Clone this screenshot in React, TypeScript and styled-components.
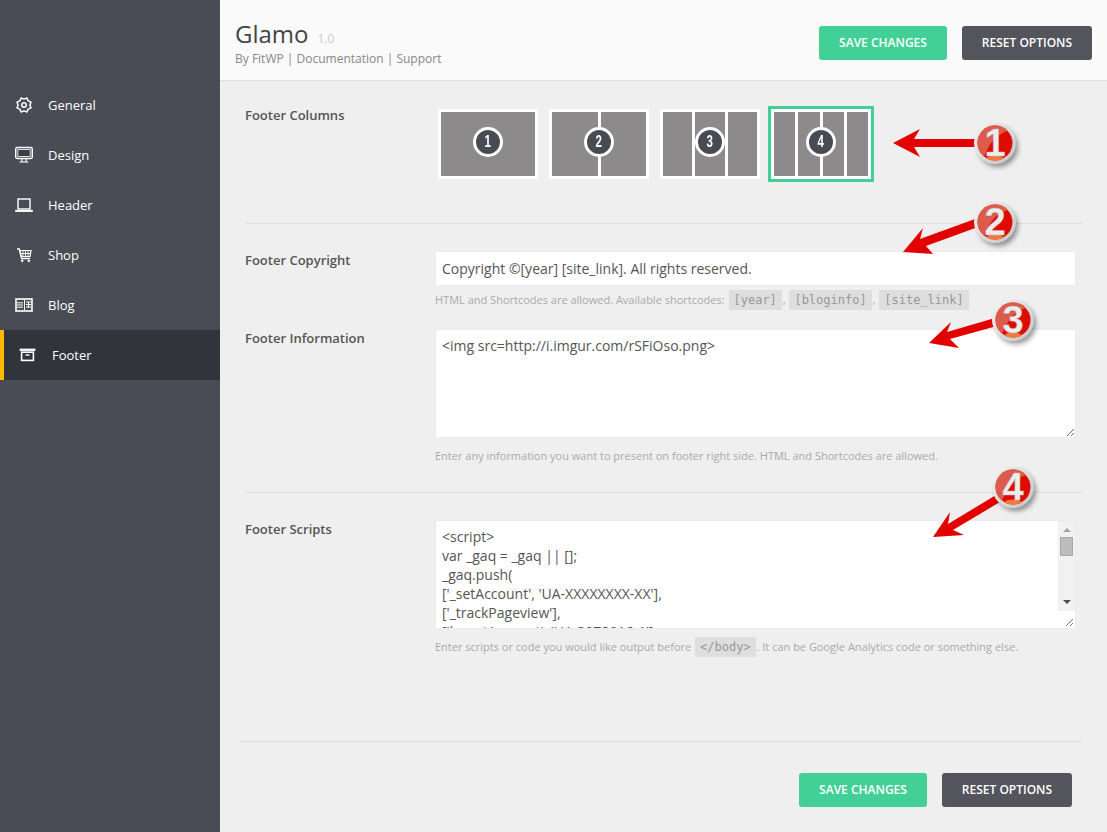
import React from 'react';
import styled, { createGlobalStyle } from 'styled-components';

const Global = createGlobalStyle`
  html, body { margin: 0; padding: 0; background: #efefef; }
  body { font-family: "Open Sans", "Liberation Sans", sans-serif; color: #555; }
  * { box-sizing: border-box; }
`;

const Page = styled.div`
  position: relative;
  display: flex;
  width: 1107px;
  height: 832px;
  overflow: hidden;
`;
const Sidebar = styled.nav`
  width: 220px;
  flex: none;
  padding-top: 80px;
  background-color: #4a4d56;
  background-image: radial-gradient(circle at 1px 1px, #464951 1px, transparent 1.2px);
  background-size: 4px 4px;
`;
const NavItem = styled.div<{ $active?: boolean }>`
  display: flex;
  align-items: center;
  height: 50px;
  gap: 15px;
  font-size: 13px;
  color: #fff;
  padding-left: 15px;
  background: ${(p) => (p.$active ? '#32343c' : 'transparent')};
  border-left: ${(p) => (p.$active ? '4px solid #ffb900' : '0')};
`;
const NavGlyph = styled.svg`
  width: 18px;
  height: 18px;
  flex: none;
  fill: none;
  stroke: #fff;
  stroke-width: 1.3;
`;
const Main = styled.main`
  flex: 1;
  display: flex;
  flex-direction: column;
  min-width: 0;
`;
const Header = styled.header`
  height: 81px;
  flex: none;
  display: flex;
  justify-content: space-between;
  padding: 17px 15px 0;
  background: #fafafa;
  border-bottom: 1px solid #dedede;
`;
const Title = styled.h1`
  margin: 0;
  font-size: 24px;
  line-height: 34px;
  font-weight: 400;
  color: #444;
`;
const Version = styled.small`
  font-size: 12px;
  line-height: 1;
  color: #ccc;
  margin-left: 9px;
`;
const Byline = styled.div`
  font-size: 12px;
  line-height: 15px;
  color: #888;
  height: 15px;
`;
const Actions = styled.div`
  display: flex;
  gap: 15px;
  padding-top: 9px;
`;
const Button = styled.button<{ $kind: 'save' | 'reset' }>`
  height: 34px;
  width: ${(p) => (p.$kind === 'save' ? '128px' : '130px')};
  border: 0;
  border-radius: 3px;
  padding: 0 0 2px;
  font: 600 12px "Open Sans", sans-serif;
  text-transform: uppercase;
  color: #fff;
  background: ${(p) => (p.$kind === 'save' ? '#43d096' : '#53545c')};
`;
const Body = styled.div`
  flex: 1;
  padding: 25px 24px 0 25px;
`;
const Row = styled.section`
  display: grid;
  grid-template-columns: 190px 641px;
`;
const Label = styled.div<{ $lift?: boolean }>`
  font-size: 13px;
  line-height: 18px;
  font-weight: 600;
  color: #555;
  margin-top: ${(p) => (p.$lift ? '-1px' : '0')};
`;
const Divider = styled.hr<{ $top: number; $bottom: number }>`
  border: 0;
  height: 1px;
  background: #dedede;
  margin: ${(p) => p.$top}px 0 ${(p) => p.$bottom}px;
`;
const Thumbs = styled.div`
  display: flex;
  gap: 11px;
  padding: 3px;
`;
const Thumb = styled.div<{ $active?: boolean }>`
  position: relative;
  width: 100px;
  height: 70px;
  border: 3px solid #fff;
  background: #fff;
  display: flex;
  gap: 3px;
  outline: ${(p) => (p.$active ? '3px solid #43d096' : '0')};
`;
const Cell = styled.div`
  flex: 1;
  background: #8c8a8b;
`;
const Badge = styled.span`
  position: absolute;
  left: 50%;
  top: 15px;
  width: 30px;
  height: 30px;
  margin-left: -15px;
  border-radius: 50%;
  border: 3px solid #fff;
  background: #484b53;
  display: flex;
  align-items: center;
  justify-content: center;
`;
const Numeral = styled.span`
  display: block;
  color: #fff;
  font: 700 17px/24px "Liberation Sans", sans-serif;
  transform: scaleX(0.68);
`;
const inputBase = `
  display: block;
  width: 639px;
  margin-left: 1px;
  border: 0;
  outline: 0;
  background: #fff;
  box-shadow: 0 0 2px rgba(0,0,0,.06);
  font: 400 14px/19px "Open Sans", sans-serif;
  color: #555;
`;
const TextInput = styled.input`
  ${inputBase}
  height: 33px;
  margin-top: 1px;
  padding: 0 6px;
`;
const TextArea = styled.textarea`
  ${inputBase}
  height: 107px;
  padding: 6px 6px;
  margin-top: 0;
  resize: both;
`;
const Hint = styled.div<{ $top: number }>`
  margin-top: ${(p) => p.$top}px;
  height: 20px;
  font-size: 11px;
  line-height: 18px;
  color: #aaa;
`;
const Chip = styled.code`
  display: inline-block;
  height: 20px;
  padding: 0 5px;
  margin: 0 -2px 0 1px;
  background: #dedede;
  color: #999;
  font: 12px/20px "DejaVu Sans Mono", monospace;
`;
const NextField = styled.div`
  height: 20px;
`;
const ScriptBox = styled.div`
  display: flex;
  width: 639px;
  margin-left: 1px;
  height: 107px;
  background: #fff;
  box-shadow: 0 0 2px rgba(0,0,0,.06);
`;
const Code = styled.pre`
  flex: 1;
  margin: 0;
  padding: 6px 6px 0;
  overflow: hidden;
  font: 400 14px/19px "Open Sans", sans-serif;
  color: #555;
`;
const Scroll = styled.div`
  width: 17px;
  display: flex;
  flex-direction: column;
  align-items: center;
`;
const Track = styled.div`
  flex: 1;
  width: 100%;
  background: #f1f1f1;
  display: flex;
  flex-direction: column;
  align-items: center;
  padding-top: 7px;
`;
const Arrow = styled.i<{ $down?: boolean }>`
  width: 0;
  height: 0;
  border-left: 4px solid transparent;
  border-right: 4px solid transparent;
  ${(p) => (p.$down ? 'border-top: 4px solid #505050; margin-top: 44px;' : 'border-bottom: 4px solid #a3a3a3;')}
`;
const ThumbBar = styled.div`
  width: 13px;
  height: 19px;
  margin-top: 5px;
  background: #bcbcbc;
  border: 1px solid #a8a8a8;
`;
const Corner = styled.div`
  width: 17px;
  height: 17px;
  display: flex;
`;
const Footer = styled.footer`
  flex: none;
  height: 91px;
  margin: 0 24px 0 20px;
  padding: 31px 11px 0 0;
  border-top: 1px solid #dedede;
  display: flex;
  justify-content: flex-end;
  gap: 15px;
`;
const Overlay = styled.svg`
  position: absolute;
  inset: 0;
  pointer-events: none;
`;
const Digit = styled.text`
  font: 700 38px "Liberation Sans", sans-serif;
  fill: #ececec;
  text-anchor: middle;
  stroke: #bbb;
  stroke-width: 0.4;
`;

const gear = (() => {
  const pts: string[] = [];
  const teeth = 8;
  for (let i = 0; i < teeth * 2; i++) {
    const a = (i * Math.PI) / teeth + Math.PI / 8;
    const r = i % 2 === 0 ? 7.6 : 5.9;
    pts.push(`${(9 + r * Math.cos(a)).toFixed(2)},${(9 + r * Math.sin(a)).toFixed(2)}`);
  }
  return pts.join(' ');
})();

const icons: Record<string, React.ReactNode> = {
  General: (
    <>
      <polygon points={gear} strokeLinejoin="round" strokeWidth={1.5} />
      <circle cx="9" cy="9" r="2.2" strokeWidth={1.5} />
    </>
  ),
  Design: (
    <>
      <rect x="0.7" y="1.5" width="16.6" height="11" rx="1.4" strokeWidth={1.4} />
      <rect x="2.8" y="3.6" width="12.4" height="6.8" fill="#3b3c44" strokeWidth={0.8} />
      <path d="M7 13v2.5M11 13v2.5M4.5 16h9" strokeWidth={1.2} />
    </>
  ),
  Header: (
    <>
      <rect x="3" y="3" width="12" height="10" strokeWidth={1.4} />
      <path d="M0.5 14.4h17v1H0.5z" fill="#fff" strokeWidth={1} />
    </>
  ),
  Shop: (
    <>
      <path d="M2 3h2.3l2.3 9.5h8.6" strokeWidth={1.4} />
      <path d="M4.8 4.5H16l-1 6H6.2z" strokeWidth={1.2} />
      <path d="M8 4.5v6M10.5 4.5v6M13 4.5v6M5.5 7.5H15.5" strokeWidth={0.9} />
      <circle cx="7.2" cy="14.8" r="1" fill="#fff" strokeWidth={0.6} />
      <circle cx="13.8" cy="14.8" r="1" fill="#fff" strokeWidth={0.6} />
    </>
  ),
  Blog: (
    <>
      <rect x="1" y="3" width="16" height="12" strokeWidth={1.6} />
      <path d="M2 6.8h6M2 9h6M2 11.2h6M9.5 4v10M11 6h5M11 8.5h5M11 11h5M13.5 6v6" strokeWidth={1} />
    </>
  ),
  Footer: (
    <>
      <rect x="1" y="3" width="15" height="1.7" fill="#fff" strokeWidth={0.7} />
      <rect x="2.6" y="6.2" width="11.8" height="8.2" strokeWidth={1.6} />
      <path d="M6.5 9h4" strokeWidth={1.4} />
    </>
  ),
};

const nav = ['General', 'Design', 'Header', 'Shop', 'Blog', 'Footer'];

const Pin = ({ n, cx, cy, arrow }: { n: number; cx: number; cy: number; arrow: string }) => (
  <g>
    <polygon points={arrow} fill="#e20000" />
    <circle cx={cx + 3} cy={cy + 4} r={20} fill="rgba(0,0,0,.4)" filter="url(#blur)" />
    <circle cx={cx} cy={cy} r={21} fill="url(#ring)" />
    <circle cx={cx} cy={cy} r={17.5} fill="#df0a00" />
    <path
      d={`M${cx - 17} ${cy + 4} A17.5 17.5 0 0 1 ${cx + 13} ${cy - 12} Q${cx - 3} ${cy - 8} ${cx - 11} ${cy + 14} Q${cx - 15} ${cy + 10} ${cx - 17} ${cy + 4}Z`}
      fill="#dc6a58"
      opacity="0.85"
    />
    <ellipse cx={cx} cy={cy + 15} rx={8} ry={2.4} fill="#f47a3c" />
    <Digit x={cx} y={cy + 13}>{n}</Digit>
  </g>
);

export default function App() {
  return (
    <Page>
      <Global />
      <Sidebar>
        {nav.map((label) => (
          <NavItem key={label} $active={label === 'Footer'}>
            <NavGlyph viewBox="0 0 18 18">{icons[label]}</NavGlyph>
            {label}
          </NavItem>
        ))}
      </Sidebar>
      <Main>
        <Header>
          <div>
            <Title>Glamo<Version>1.0</Version></Title>
            <Byline>By FitWP | Documentation | Support</Byline>
          </div>
          <Actions>
            <Button $kind="save">Save Changes</Button>
            <Button $kind="reset">Reset Options</Button>
          </Actions>
        </Header>
        <Body>
          <Row>
            <Label>Footer Columns</Label>
            <Thumbs>
              {[1, 2, 3, 4].map((n) => (
                <Thumb key={n} $active={n === 4}>
                  {Array.from({ length: n }).map((_, i) => <Cell key={i} />)}
                  <Badge><Numeral>{n}</Numeral></Badge>
                </Thumb>
              ))}
            </Thumbs>
          </Row>
          <Divider $top={41} $bottom={27} />
          <Row>
            <Label>Footer Copyright</Label>
            <div>
              <TextInput readOnly value="Copyright ©[year] [site_link]. All rights reserved." />
              <Hint $top={5}>
                HTML and Shortcodes are allowed. Available shortcodes: <Chip>[year]</Chip> , <Chip>[bloginfo]</Chip> , <Chip>[site_link]</Chip>
              </Hint>
              <NextField />
            </div>
          </Row>
          <Row>
            <Label $lift>Footer Information</Label>
            <div>
              <TextArea readOnly value="<img src=http://i.imgur.com/rSFiOso.png>" />
              <Hint $top={10}>Enter any information you want to present on footer right side. HTML and Shortcodes are allowed.</Hint>
            </div>
          </Row>
          <Divider $top={25} $bottom={28} />
          <Row>
            <Label $lift>Footer Scripts</Label>
            <div>
              <ScriptBox>
                <Code>{`<script>
var _gaq = _gaq || [];
_gaq.push(
['_setAccount', 'UA-XXXXXXXX-XX'],
['_trackPageview'],
['b._setAccount', 'UA-3078916-1'],`}</Code>
                <Scroll>
                  <Track>
                    <Arrow />
                    <ThumbBar />
                    <Arrow $down />
                  </Track>
                  <Corner>
                    <svg width="17" height="17" viewBox="0 0 17 17">
                      <rect width="17" height="17" fill="#fff" />
                      <path d="M8 15L15 8M12 15L15 12" stroke="#777" strokeWidth="1" />
                    </svg>
                  </Corner>
                </Scroll>
              </ScriptBox>
              <Hint $top={9}>
                Enter scripts or code you would like output before <Chip>&lt;/body&gt;</Chip> . It can be Google Analytics code or something else.
              </Hint>
            </div>
          </Row>
        </Body>
        <Footer>
          <Button $kind="save">Save Changes</Button>
          <Button $kind="reset">Reset Options</Button>
        </Footer>
      </Main>
      <Overlay width="1107" height="832" viewBox="0 0 1107 832">
        <defs>
          <linearGradient id="ring" x1="0" y1="0" x2="1" y2="1">
            <stop offset="0" stopColor="#f4f4f4" />
            <stop offset="1" stopColor="#c4c4c4" />
          </linearGradient>
          <filter id="blur"><feGaussianBlur stdDeviation="2.5" /></filter>
        </defs>
        <Pin n={1} cx={995} cy={143} arrow="893,143 920,129 914,139 980,139 980,147 914,147 920,157" />
        <Pin n={2} cx={995} cy={222} arrow="903,252 923,228 920,239 975,219 978,227 926,246 933,254" />
        <Pin n={3} cx={1013} cy={320} arrow="929,343 951,322 947,332 995,318 997,326 950,339 959,348" />
        <Pin n={4} cx={1013} cy={487} arrow="933,537 950,512 948,524 996,495 1000,502 953,530 964,535" />
      </Overlay>
    </Page>
  );
}
